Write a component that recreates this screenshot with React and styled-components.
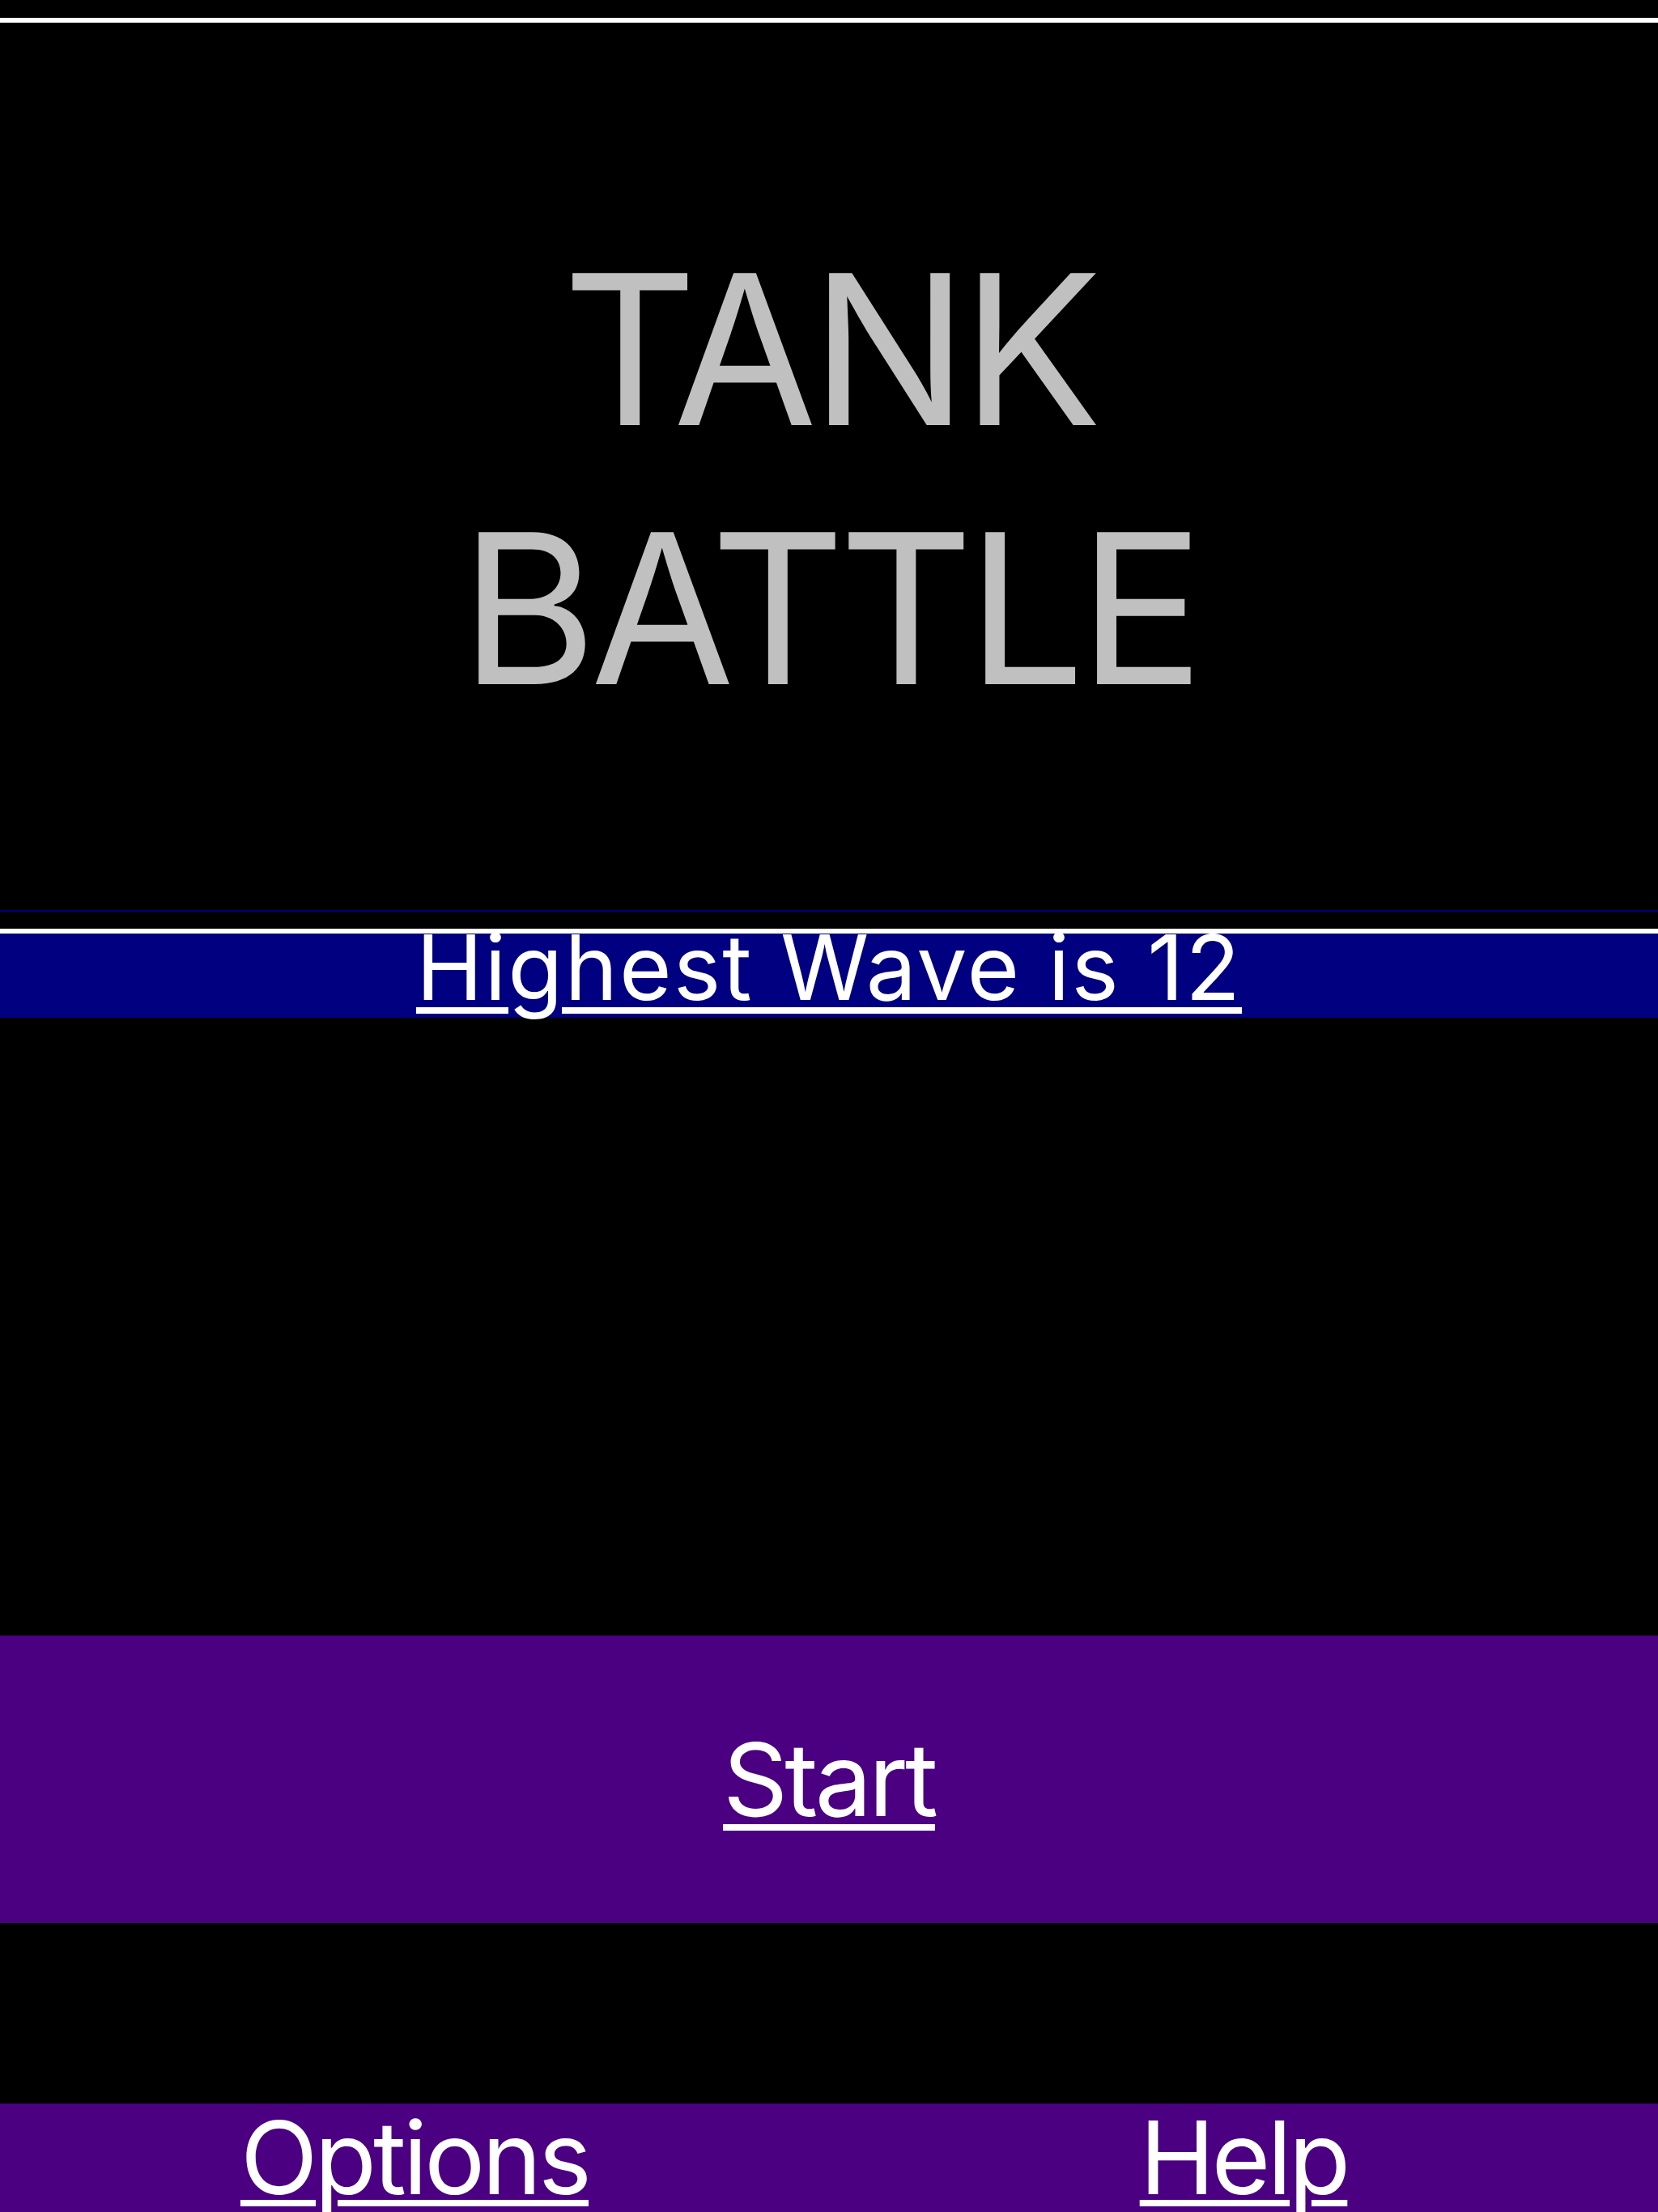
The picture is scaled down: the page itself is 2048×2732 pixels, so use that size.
import styled, { createGlobalStyle } from "styled-components";

const GlobalStyle = createGlobalStyle`
  html, body {
    margin: 0;
    padding: 0;
    background: #000;
  }
  body {
    font-family: Inter, "Noto Sans", "Liberation Sans", sans-serif;
  }
`;

const Page = styled.div`
  height: 2732px;
  overflow: hidden;
  padding-top: 22px;
  box-sizing: border-box;
  background: #000;
  display: flex;
  flex-direction: column;
`;

const Header = styled.header`
  flex: none;
  height: 1104px;
  box-sizing: border-box;
  border-top: 6px solid #fff;
  border-bottom: 2px solid #000080;
  display: flex;
  align-items: flex-start;
  justify-content: center;
  padding-top: 243px;
`;

const Title = styled.h1`
  margin: 0;
  color: #c0c0c0;
  font-weight: 400;
  font-size: 258px;
  line-height: 320px;
  letter-spacing: -8px;
  text-align: center;
`;

const ScoreBar = styled.div`
  flex: none;
  margin-top: 21px;
  height: 110px;
  box-sizing: border-box;
  border-top: 6px solid #fff;
  background: #000080;
  text-align: center;
  font-size: 111px;
  line-height: 84px;
  letter-spacing: 2px;
`;

const Link = styled.a`
  color: #fff;
  text-decoration: underline;
  text-decoration-thickness: 8px;
  text-underline-offset: ${(p) => p.$offset || 9}px;
  cursor: pointer;
`;

const StartBar = styled.div`
  flex: none;
  margin-top: 763px;
  height: 355px;
  background: #4b0082;
  display: flex;
  align-items: center;
  justify-content: center;
  font-size: 125px;
  letter-spacing: -4px;
`;

const BottomBar = styled.nav`
  margin-top: 223px;
  flex: 1;
  background: #4b0082;
  display: grid;
  grid-template-columns: 1fr 1fr;
  align-items: start;
  font-size: 125px;
  line-height: 133px;
  letter-spacing: -4px;
`;

const Cell = styled.div`
  text-align: center;
`;

const App = () => {
  return (
    <>
      <GlobalStyle />
      <Page>
        <Header>
          <Title>
            TANK
            <br />
            BATTLE
          </Title>
        </Header>
        <ScoreBar>
          <Link>Highest Wave is 12</Link>
        </ScoreBar>
        <StartBar>
          <Link $offset={10}>Start</Link>
        </StartBar>
        <BottomBar>
          <Cell>
            <Link $offset={7}>Options</Link>
          </Cell>
          <Cell>
            <Link $offset={7}>Help</Link>
          </Cell>
        </BottomBar>
      </Page>
    </>
  );
};

export default App;
